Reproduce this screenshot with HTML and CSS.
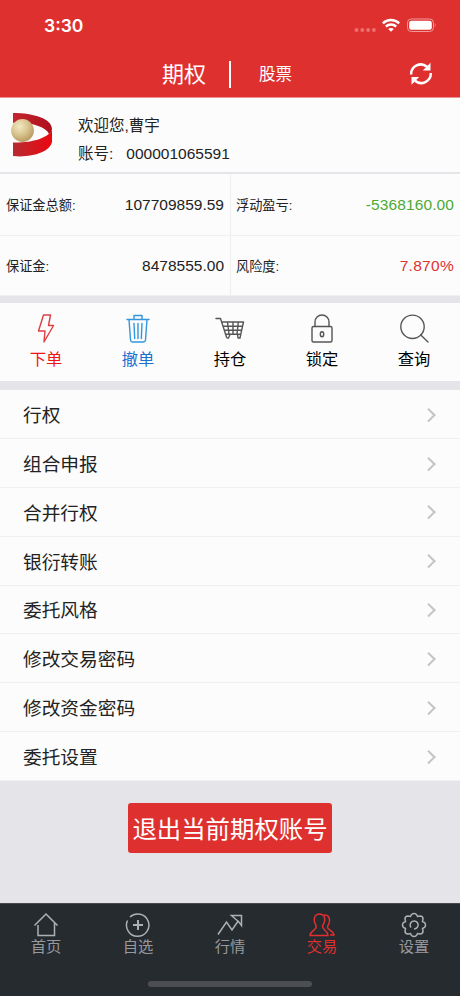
FILE: index.html
```html
<!DOCTYPE html>
<html lang="zh-CN">
<head>
<meta charset="utf-8">
<meta name="viewport" content="width=device-width, initial-scale=1">
<title>期权交易</title>
<link rel="stylesheet" href="styles.css">
</head>
<body>
<header class="header">
  <div class="status">
    <span class="time">3:30</span>
    <svg class="status-icons" width="82" height="16" viewBox="0 0 82 16">
      <g fill="#ea7070"><circle cx="2.5" cy="12" r="2"/><circle cx="8.3" cy="12" r="2"/><circle cx="14.1" cy="12" r="2"/><circle cx="19.9" cy="12" r="2"/></g>
      <g fill="none" stroke="#fff" stroke-width="2.5"><path d="M28.8 5.3C33.5.9 40.5.9 45.2 5.3"/><path d="M31.8 8.5C34.8 5.8 39.2 5.8 42.2 8.5"/></g>
      <path d="M34.2 11C35.9 9.6 38.1 9.6 39.8 11L37 13.800Z" fill="#fff"/>
      <rect x="53.5" y="1" width="26" height="12.5" rx="3.8" fill="none" stroke="#f19a9a"/>
      <rect x="55.2" y="2.7" width="22.6" height="9.1" rx="2.3" fill="#fff"/>
      <path d="M80.8 5.2Q82.2 7.2 80.8 9.3Z" fill="#f19a9a"/>
    </svg>
  </div>
  <nav class="switcher">
    <span class="tab-main">期权</span><span class="bar"></span><span class="tab-alt">股票</span>
    <svg class="refresh" width="24" height="24" viewBox="0 0 24 24">
      <g fill="none" stroke="#fff" stroke-width="2.5"><path d="M2.2 12.5A9.6 9.6 0 0 1 18 4.8"/><path d="M21.8 11A9.6 9.6 0 0 1 6 18.7"/></g>
      <path d="M21.5.8V8.5H13.800ZM2.5 22.700V15H10.200Z" fill="#fff"/>
    </svg>
  </nav>
</header>
<main>
  <section class="profile">
    <svg class="logo" width="42" height="44" viewBox="0 0 42 44">
      <defs>
        <linearGradient id="ribbon"><stop stop-color="#c42530"/><stop offset="1" stop-color="#ad101c"/></linearGradient>
        <linearGradient id="base"><stop stop-color="#b72b31"/><stop offset="1" stop-color="#ec0710"/></linearGradient>
        <radialGradient id="pearl" cx=".38" cy=".32" r=".75"><stop stop-color="#f2e8c4"/><stop offset=".5" stop-color="#d8c48e"/><stop offset="1" stop-color="#b3945a"/></radialGradient>
      </defs>
      <path d="M2 0C23 0 41 6 41 16Q41 19 38 21C35 14 20 9 2 10Z" fill="url(#ribbon)"/>
      <path d="M2 29.5C21 30 37 25 41 17V29C39 39 20 45 2 43Z" fill="url(#base)"/>
      <circle cx="11.5" cy="17.5" r="11.4" fill="url(#pearl)"/>
    </svg>
    <div class="who"><div>欢迎您,曹宇</div><div class="account"><span>账号:</span><span>000001065591</span></div></div>
  </section>
  <section class="funds">
    <div class="cell"><span>保证金总额:</span><b>107709859.59</b></div>
    <div class="cell"><span>浮动盈亏:</span><b class="down">-5368160.00</b></div>
    <div class="cell"><span>保证金:</span><b>8478555.00</b></div>
    <div class="cell"><span>风险度:</span><b class="up">7.870%</b></div>
  </section>
  <section class="actions">
    <div class="action order"><svg viewBox="0 0 30 30"><path d="M12.5 1H19.5L17.5 11.5H22.5L13 28L14 17H7.5Z"/></svg><span>下单</span></div>
    <div class="action cancel"><svg viewBox="0 0 30 30"><path d="M4 5.5H26M6 5.5L7.5 26Q7.7 28 9.5 28H20.5Q22.3 28 22.5 26L24 5.5M11 5V1.5H19V5M11 9.5L11.7 24.5M15 9.5V24.5M19 9.5L18.3 24.5"/></svg><span>撤单</span></div>
    <div class="action"><svg viewBox="0 0 30 30"><path d="M1 4.5H5.5L11.5 23Q12 24.500 13.5 24L15 20.5M7 8H28.5L25.8 20.2H10.5M8.3 12.200H27.5M9.5 16.200H26.5M12.5 8L14 20.2M18 8V20.2M23.3 8L22 20.2M22.5 20.2L23 24H25L25.8 20.2"/></svg><span>持仓</span></div>
    <div class="action"><svg viewBox="0 0 30 30"><rect x="5" y="12.5" width="20" height="15.5" rx="1.5"/><path d="M8 12.5V8A7 7 0 0 1 22 8V12.5"/><ellipse cx="15" cy="20.3" rx="1.7" ry="2.5"/></svg><span>锁定</span></div>
    <div class="action"><svg viewBox="0 0 30 30"><circle cx="13.5" cy="12.8" r="11.7"/><path d="M21.8 21L29 28"/></svg><span>查询</span></div>
  </section>
  <ul class="menu">
    <li><span>行权</span><i></i></li>
    <li><span>组合申报</span><i></i></li>
    <li><span>合并行权</span><i></i></li>
    <li><span>银衍转账</span><i></i></li>
    <li><span>委托风格</span><i></i></li>
    <li><span>修改交易密码</span><i></i></li>
    <li><span>修改资金密码</span><i></i></li>
    <li><span>委托设置</span><i></i></li>
  </ul>
  <button class="logout">退出当前期权账号</button>
</main>
<footer class="footer">
  <nav class="tabs">
    <div class="tab"><svg viewBox="0 0 26 26"><path d="M1.5 13.5L13 2L24.5 13.5M5 13V23.5H21.5V10.5"/></svg><span>首页</span></div>
    <div class="tab"><svg viewBox="0 0 26 26"><path d="M5 5A11.2 11.2 0 1 1 2.5 8.5"/><path class="plus" d="M13 8V18M8 13H18"/></svg><span>自选</span></div>
    <div class="tab"><svg viewBox="0 0 26 26"><path d="M1 22.500L9.500 10L15 18L21.5 8.500M14.500 3.500H24.5V13.500L21.500 9.500L18.500 7Z"/></svg><span>行情</span></div>
    <div class="tab active"><svg viewBox="0 0 26 26"><path d="M10.5 2C6.5 2 5 5 5.3 8.5C5.5 11 6.5 12 7.2 14C8 18.5 1 18.5 1 23.5H19C19 18.5 13 18 13.5 14C14.3 12 15.5 11 15.7 8.5C16 5 14.5 2 10.5 2ZM15 3C19 2.5 20.8 5.500 20.5 9C20.3 12 18.8 13 18.5 15C18.3 18 25 19 25 23H21"/></svg><span>交易</span></div>
    <div class="tab"><svg viewBox="0 0 26 26"><path d="M10.5 2.5Q13 .5 15.5 2.5L16.5 4.5L19 4Q22 4 22 7L21.5 9.5L23.5 10.5Q25.5 13 23.5 15.5L21.5 16.5L22 19Q22 22 19 22L16.5 21.5L15.5 23.5Q13 25.5 10.5 23.5L9.5 21.5L7 22Q4 22 4 19L4.5 16.5L2.5 15.5Q.5 13 2.5 10.5L4.5 9.5L4 7Q4 4 7 4L9.5 4.5Z"/><path d="M10 15.5A4 4 0 1 1 13 17"/></svg><span>设置</span></div>
  </nav>
  <div class="home-indicator"></div>
</footer>
</body>
</html>
```
FILE: styles.css
```css
* { box-sizing: border-box; }
body {
  margin: 0;
  width: 460px;
  height: 996px;
  overflow: hidden;
  display: flex;
  flex-direction: column;
  background: #e5e4e8;
  color: #222;
  font-family: "Liberation Sans", "Noto Sans CJK SC", sans-serif;
}
svg { display: block; flex: none; }
.header { height: 98px; background: #df3030; color: #fff; border-bottom: 1px solid #ec9297; }
.status { height: 50px; display: flex; justify-content: space-between; padding: 17px 24px 0 44px; }
.time { font: 600 17.5px/18px Inter, sans-serif; }
.status-icons { margin-top: 1px; }
.switcher { height: 47px; display: flex; align-items: center; padding: 1px 27px 0 162px; }
.tab-main { font-size: 22px; width: 67px; line-height: 46px; padding-top: 1px; }
.bar { width: 2px; height: 27px; background: #fff; }
.tab-alt { font-size: 16.5px; margin-left: 28px; line-height: 46px; }
.refresh { margin-left: auto; }
main { flex: 1; display: flex; flex-direction: column; }
.profile { height: 76px; display: flex; background: #fcfcfc; border-bottom: 2px solid #e5e4e8; padding: 15px 10px 0 11px; }
.who { margin: -1px 0 0 25px; font-size: 15.5px; line-height: 28px; }
.account { display: flex; gap: 13px; }
.funds { height: 122px; display: grid; grid-template-columns: 231px 1fr; grid-template-rows: 62px 60px; background: #fcfcfc; }
.cell { display: flex; align-items: center; justify-content: space-between; padding: 0 6px 0 5px; border-bottom: 1px solid #f0f0f1; }
.cell:nth-child(odd) { border-right: 1px solid #eeeeef; padding-left: 6px; }
.cell span { font-size: 13.2px; }
.cell b { font-size: 15.5px; font-weight: 400; }
.cell .down { color: #4caa35; letter-spacing: .1px; }
.cell .up { color: #df3030; letter-spacing: .3px; }
.actions { height: 78px; margin-top: 7px; background: #fcfcfc; display: grid; grid-template-columns: repeat(5, 1fr); }
.action { display: flex; flex-direction: column; align-items: center; padding-top: 11px; color: #000; font-size: 16.3px; line-height: 24px; }
.action svg { width: 30px; height: 30px; margin-bottom: 3px; fill: none; stroke: #555; stroke-width: 1.4; stroke-linecap: round; stroke-linejoin: round; }
.order { color: #f01414; }
.order svg { stroke: #dc4040; }
.cancel { color: #1c70d0; }
.cancel svg { stroke: #3297dc; }
.menu { list-style: none; margin: 9px 0 0; padding: 0; height: 391px; background: #fcfcfc; display: grid; grid-template-rows: repeat(8, 1fr); }
.menu li { display: flex; align-items: center; justify-content: space-between; padding: 0 27px 0 23px; font-size: 18.7px; border-bottom: 1px solid #f0f0f1; }
.menu li span { margin-top: -1px; }
.menu i { width: 9.5px; height: 9.5px; margin-top: 1px; border: solid #c4c4c7; border-width: 2px 2px 0 0; transform: rotate(45deg); }
.logout { align-self: center; width: 204px; height: 50px; margin-top: 22px; border: 0; border-radius: 3px; padding: 0; color: #fff; background: #df3030; font: 400 24.4px/50px "Noto Sans CJK SC", sans-serif; white-space: nowrap; }
.footer { height: 93px; background: #262b30; border-top: 1px solid #45484c; }
.tabs { height: 77px; display: grid; grid-template-columns: repeat(5, 1fr); }
.tab { display: flex; flex-direction: column; align-items: center; padding-top: 8px; color: #98999c; font-size: 15.3px; line-height: 18px; }
.tab svg { width: 26px; height: 26px; fill: none; stroke: #aeb0b4; stroke-width: 1.5; }
.tab .plus { stroke-width: 2; }
.tab.active { color: #df3030; }
.tab.active svg { stroke: #df3030; }
.home-indicator { width: 164px; height: 6px; margin: 0 auto; border-radius: 3px; background: #4c4e51; }
```
